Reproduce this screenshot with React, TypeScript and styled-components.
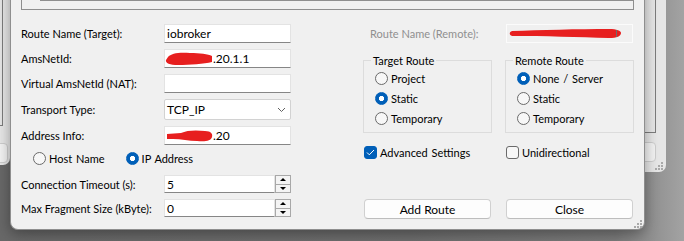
import styled, { createGlobalStyle } from "styled-components";

const GlobalStyle = createGlobalStyle`
  html, body {
    margin: 0;
    padding: 0;
    background: #6c6c6c;
  }
`;

const Desktop = styled.div`
  position: relative;
  width: 684px;
  height: 241px;
  overflow: hidden;
  background: linear-gradient(90deg, #686868 0%, #6e6e6e 60%, #7b7b7b 90%, #a3a3a3 100%);
  font-family: Lato, "Liberation Sans", sans-serif;
  font-size: 11px;
  color: #000;
`;

/* windows lying behind the dialog */
const BackWindow = styled.div<{ $left: number; $width: number; $height: number; $pad: number }>`
  position: absolute;
  top: -20px;
  left: ${(p) => p.$left}px;
  width: ${(p) => p.$width}px;
  height: ${(p) => p.$height}px;
  box-sizing: border-box;
  padding: 0 ${(p) => p.$pad}px ${(p) => p.$pad}px 0;
  background: #e6e6e6;
  border-radius: 0 0 7px 7px;
  display: flex;
  flex-direction: column;
  align-items: flex-end;
`;

const BackList = styled.div<{ $inset: number }>`
  flex: 1;
  align-self: stretch;
  margin-right: ${(p) => p.$inset}px;
  border: 1px solid #7c7c7c;
  border-top: none;
`;

const BackButton = styled.div<{ $mt?: number }>`
  box-sizing: border-box;
  width: 127px;
  height: 20px;
  margin-top: ${(p) => p.$mt ?? 9}px;
  background: #f2f2f2;
  border: 1px solid #cdcdcd;
  border-radius: 4px;
`;

const Dialog = styled.div`
  position: absolute;
  top: -40px;
  left: 10px;
  width: 635px;
  height: 270px;
  box-sizing: border-box;
  padding: 0 10px;
  background: #f0f0f0;
  border: 1px solid #8e8e8e;
  border-top: none;
  border-radius: 0 0 8px 8px;
  box-shadow: 0 4px 14px rgba(0, 0, 0, 0.35);
  display: flex;
  flex-direction: column;
`;

const TopBox = styled.div`
  box-sizing: border-box;
  height: 50px;
  padding-left: 18px;
  border: 1px solid #8e8e8e;
  border-top: none;
  display: flex;
`;

const TopInner = styled.div`
  flex: 1;
  height: 41px;
  box-sizing: border-box;
  border-left: 1px solid #8e8e8e;
  border-bottom: 1px solid #8e8e8e;
`;

const Main = styled.div`
  margin-top: 14px;
  display: grid;
  grid-template-columns: 270px 271px;
  column-gap: 72px;
`;

const Column = styled.div`
  display: flex;
  flex-direction: column;
`;

const LeftColumn = styled(Column)`
  gap: 6px;
`;

const FieldRow = styled.div`
  display: grid;
  grid-template-columns: 143px 127px;
  align-items: center;
`;

const Label = styled.span<{ $disabled?: boolean }>`
  color: ${(p) => (p.$disabled ? "#8f8f8f" : "#000")};
  padding-left: ${(p) => (p.$disabled ? 7 : 0)}px;
  white-space: nowrap;
`;

const TextBox = styled.div<{ $disabled?: boolean; $h?: number }>`
  box-sizing: border-box;
  height: ${(p) => p.$h ?? 19}px;
  display: flex;
  align-items: center;
  padding: 0 2px;
  overflow: hidden;
  white-space: nowrap;
  font-size: 12px;
  background: ${(p) => (p.$disabled ? "#f0f0f0" : "#fff")};
  border: 1px solid ${(p) => (p.$disabled ? "#fbfbfb" : "#e3e3e3")};
  border-bottom-color: ${(p) => (p.$disabled ? "#fbfbfb" : "#868686")};
`;

const SelectBox = styled.div`
  box-sizing: border-box;
  height: 21px;
  display: flex;
  align-items: center;
  justify-content: space-between;
  padding: 0 4px 0 2px;
  font-size: 12px;
  background: #fff;
  border: 1px solid #d2d2d2;
  border-radius: 2px;
`;

const SpinField = styled.div`
  display: grid;
  grid-template-columns: 111px 16px;
`;

const Spinner = styled.div`
  display: flex;
  flex-direction: column;
  height: 18px;
`;

const SpinButton = styled.div<{ $up?: boolean }>`
  flex: 1;
  box-sizing: border-box;
  display: flex;
  align-items: center;
  justify-content: center;
  background: #f4f4f4;
  border: 1px solid #a8a8a8;
  border-top-width: ${(p) => (p.$up ? 1 : 0)}px;
`;

const Arrow = styled.span<{ $up?: boolean }>`
  width: 0;
  height: 0;
  border-left: 3px solid transparent;
  border-right: 3px solid transparent;
  ${(p) => (p.$up ? "border-bottom: 3px solid #000;" : "border-top: 3px solid #000;")}
`;

const RadioRow = styled.div`
  display: flex;
  height: 14px;
  align-items: center;
  padding-left: 12px;
  margin-bottom: 4px;
  gap: 21px;
`;

const Option = styled.label<{ $h?: number }>`
  display: flex;
  align-items: center;
  gap: 3px;
  height: ${(p) => p.$h ?? 14}px;
  white-space: nowrap;
  word-spacing: 1px;
`;

const Radio = styled.span<{ $checked?: boolean }>`
  box-sizing: border-box;
  width: 13px;
  height: 13px;
  border-radius: 50%;
  flex-shrink: 0;
  background: ${(p) =>
    p.$checked
      ? "radial-gradient(circle, #fff 0 2.4px, #005fb8 2.9px)"
      : "#f7f7f7"};
  border: 1px solid ${(p) => (p.$checked ? "#005fb8" : "#6a6a6a")};
`;

const Check = styled.span<{ $checked?: boolean }>`
  box-sizing: border-box;
  width: 13px;
  height: 13px;
  margin-left: 1px;
  flex-shrink: 0;
  border-radius: 3px;
  display: flex;
  align-items: center;
  justify-content: center;
  background: ${(p) => (p.$checked ? "#005fb8" : "#f7f7f7")};
  border: 1px solid ${(p) => (p.$checked ? "#005fb8" : "#6a6a6a")};
`;

const Groups = styled.div`
  margin-top: 10px;
  display: grid;
  grid-template-columns: 129px 129px;
  column-gap: 13px;
`;

const Group = styled.fieldset`
  margin: 0;
  min-width: 0;
  padding: 0 0 4px 11px;
  border: 1px solid #dcdcdc;
  display: flex;
  flex-direction: column;
`;

const Legend = styled.legend`
  padding: 0 2px;
  margin-left: -4px;
  line-height: 15px;
`;

const Pair = styled.div<{ $mt: number }>`
  margin-top: ${(p) => p.$mt}px;
  display: grid;
  grid-template-columns: 129px 129px;
  column-gap: 13px;
`;

const Button = styled.button`
  box-sizing: border-box;
  width: 127px;
  height: 20px;
  margin-left: 1px;
  padding: 0;
  background: #fdfdfd;
  border: 1px solid #d0d0d0;
  border-bottom-color: #bdbdbd;
  border-radius: 4px;
  font: inherit;
  font-size: 12px;
  color: #000;
`;

const Grip = styled.svg<{ $r: number; $b: number }>`
  position: absolute;
  right: ${(p) => p.$r}px;
  bottom: ${(p) => p.$b}px;
`;

const ScribbleSvg = styled.svg<{ $ml?: number }>`
  flex-shrink: 0;
  margin-left: ${(p) => p.$ml ?? 0}px;
`;

const RedactTail = styled.span`
  width: 1px;
  height: 7px;
  margin-left: -6px;
  background: #6d6d6d;
`;

function Scribble({ w, h, d, ml }: { w: number; h: number; d: string; ml?: number }) {
  return (
    <ScribbleSvg $ml={ml} width={w} height={h} viewBox={`0 0 ${w} ${h}`}>
      <path d={d} fill="#e71f1f" />
    </ScribbleSvg>
  );
}

function GripDots({ r, b }: { r: number; b: number }) {
  const dots = [
    [6, 0],
    [3, 3],
    [6, 3],
    [0, 6],
    [3, 6],
    [6, 6],
  ];
  return (
    <Grip $r={r} $b={b} width="8" height="8" viewBox="0 0 8 8">
      {dots.map(([x, y]) => (
        <rect key={`${x}-${y}`} x={x} y={y} width="2" height="2" fill="#a9a9a9" />
      ))}
    </Grip>
  );
}

function Chevron() {
  return (
    <svg width="9" height="6" viewBox="0 0 9 6">
      <polyline points="1,1 4.5,4.5 8,1" fill="none" stroke="#606060" strokeWidth="1" />
    </svg>
  );
}

function SpinBox({ value }: { value: string }) {
  return (
    <SpinField>
      <TextBox $h={18}>{value}</TextBox>
      <Spinner>
        <SpinButton $up>
          <Arrow $up />
        </SpinButton>
        <SpinButton>
          <Arrow />
        </SpinButton>
      </Spinner>
    </SpinField>
  );
}

export default function App() {
  return (
    <>
      <GlobalStyle />
      <Desktop>
        <BackWindow $left={-300} $width={310} $height={185} $pad={2}>
          <BackList $inset={5} />
          <BackButton $mt={17} />
        </BackWindow>
        <BackWindow $left={300} $width={366} $height={192} $pad={10}>
          <BackList $inset={0} />
          <BackButton />
          <GripDots r={3} b={2} />
        </BackWindow>

        <Dialog>
          <TopBox>
            <TopInner />
          </TopBox>

          <Main>
            <LeftColumn>
              <FieldRow>
                <Label>Route Name (Target):</Label>
                <TextBox>iobroker</TextBox>
              </FieldRow>
              <FieldRow>
                <Label>AmsNetId:</Label>
                <TextBox>
                  <Scribble
                    w={49}
                    h={13}
                    ml={-3}
                    d="M4 5 C7 1 16 0 26 1 C36 1 44 2 48 4 L48 10 C40 12 26 13 14 13 C6 13 1 11 2 8 Z"
                  />
                  .20.1.1
                </TextBox>
              </FieldRow>
              <FieldRow>
                <Label>Virtual AmsNetId (NAT):</Label>
                <TextBox />
              </FieldRow>
              <FieldRow>
                <Label>Transport Type:</Label>
                <SelectBox>
                  TCP_IP
                  <Chevron />
                </SelectBox>
              </FieldRow>
              <FieldRow>
                <Label>Address Info:</Label>
                <TextBox>
                  <Scribble
                    w={46}
                    h={12}
                    d="M0 4 L14 3 C20 0 30 0 38 1 C44 1 46 4 45 7 C44 11 38 12 30 11 C22 11 14 9 6 9 L0 9 Z"
                  />
                  .20
                </TextBox>
              </FieldRow>
              <RadioRow>
                <Option>
                  <Radio />
                  Host Name
                </Option>
                <Option>
                  <Radio $checked />
                  IP Address
                </Option>
              </RadioRow>
              <FieldRow>
                <Label>Connection Timeout (s):</Label>
                <SpinBox value="5" />
              </FieldRow>
              <FieldRow>
                <Label>Max Fragment Size (kByte):</Label>
                <SpinBox value="0" />
              </FieldRow>
            </LeftColumn>

            <Column>
              <FieldRow>
                <Label $disabled>Route Name (Remote):</Label>
                <TextBox $disabled>
                  <Scribble
                    w={113}
                    h={11}
                    d="M3 3 C30 2 70 1 100 1 C108 1 112 3 112 5 C112 8 108 10 100 10 C70 9 35 8 3 8 C0 7 0 4 3 3 Z"
                  />
                  <RedactTail />
                </TextBox>
              </FieldRow>

              <Groups>
                <Group>
                  <Legend>Target Route</Legend>
                  <Option $h={20}>
                    <Radio />
                    Project
                  </Option>
                  <Option $h={20}>
                    <Radio $checked />
                    Static
                  </Option>
                  <Option $h={20}>
                    <Radio />
                    Temporary
                  </Option>
                </Group>
                <Group>
                  <Legend>Remote Route</Legend>
                  <Option $h={20}>
                    <Radio $checked />
                    None / Server
                  </Option>
                  <Option $h={20}>
                    <Radio />
                    Static
                  </Option>
                  <Option $h={20}>
                    <Radio />
                    Temporary
                  </Option>
                </Group>
              </Groups>

              <Pair $mt={13}>
                <Option $h={13}>
                  <Check $checked>
                    <svg width="9" height="7" viewBox="0 0 9 7">
                      <polyline points="1,3.5 3.3,5.8 8,1" fill="none" stroke="#fff" strokeWidth="1" />
                    </svg>
                  </Check>
                  Advanced Settings
                </Option>
                <Option $h={13}>
                  <Check />
                  Unidirectional
                </Option>
              </Pair>

              <Pair $mt={40}>
                <Button>Add Route</Button>
                <Button>Close</Button>
              </Pair>
            </Column>
          </Main>
          <GripDots r={2} b={1} />
        </Dialog>
      </Desktop>
    </>
  );
}
